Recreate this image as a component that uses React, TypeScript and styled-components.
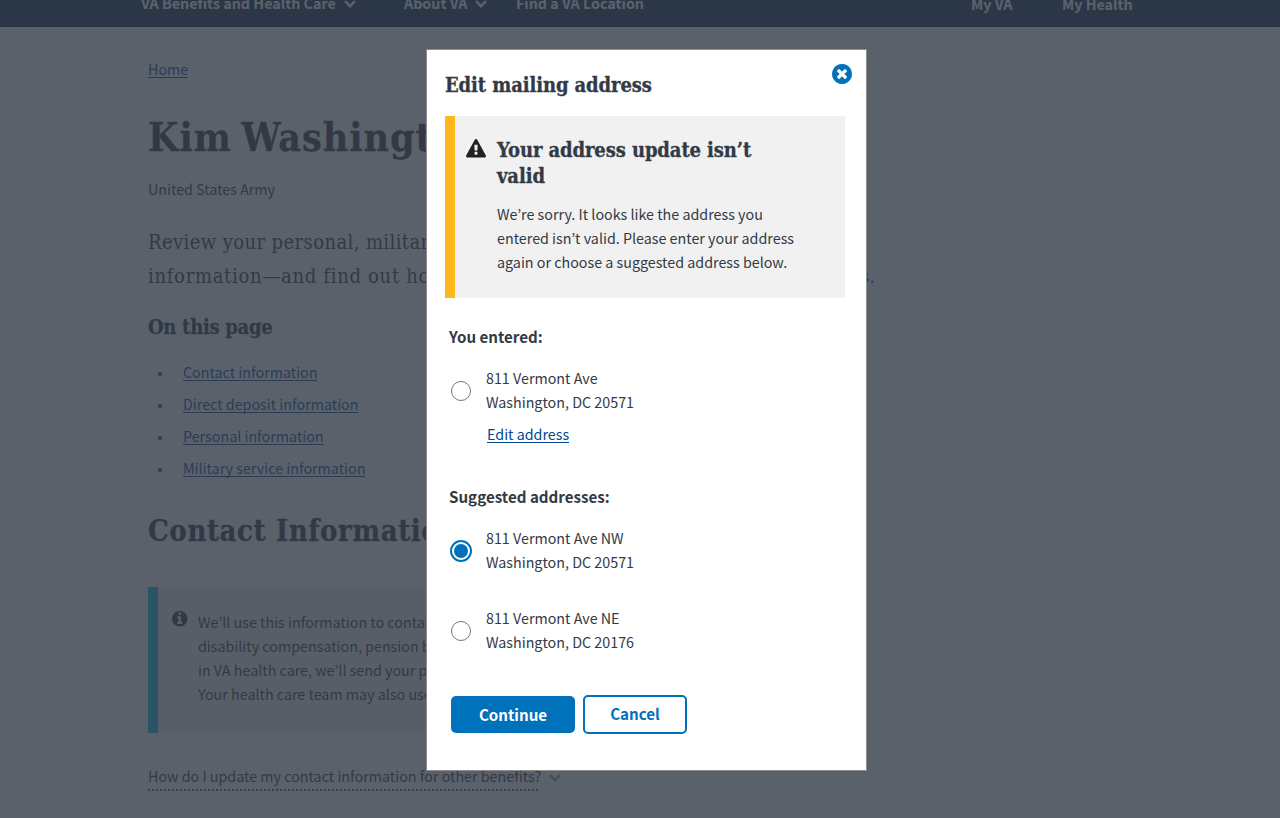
import React from "react";
import styled, { createGlobalStyle, css } from "styled-components";

const ink = "#323a45";
const blue = "#0071bb";
const link = "#004795";

const GlobalStyle = createGlobalStyle`
  * { box-sizing: border-box; }
  body { margin: 0; background: #fff; overflow: hidden; }
  h1, h2, h3, h4, p, ul { margin: 0; padding: 0; font-weight: inherit; }
`;

const sans = css`
  font-family: "Noto Sans CJK KR", "Open Sans", sans-serif;
  font-size: 14.3px;
  line-height: 24px;
`;
const slab = css`
  font-family: "DejaVu Serif Condensed", "DejaVu Serif", serif;
  font-stretch: condensed;
`;
const slabBold = css`
  ${slab}
  font-weight: 700;
  -webkit-text-stroke: 0.3px currentColor;
`;

const Page = styled.div`
  ${sans}
  height: 818px;
  overflow: hidden;
  color: ${ink};
  white-space: nowrap;
`;
const NavBar = styled.nav`
  height: 27px;
  background: #112e51;
  color: #fff;
  font-weight: 700;
  display: flex;
  align-items: flex-start;
  padding-left: 141px;
  overflow: hidden;
`;
const NavItem = styled.span<{ $width: number; $drop?: number }>`
  display: flex;
  align-items: center;
  gap: 8px;
  flex: none;
  width: ${(p) => p.$width}px;
  margin-top: ${(p) => -9 + (p.$drop ?? 0)}px;
  svg { margin-top: 2px; }
`;
const Content = styled.main`
  display: flex;
  flex-direction: column;
  align-items: flex-start;
  padding: 30px 0 0 148px;
`;
const Anchor = styled.a`
  display: inline-block;
  height: 21px;
  color: ${link};
  text-decoration: none;
  border-bottom: 1px solid ${link};
`;
const Name = styled.h1`
  ${slabBold}
  font-size: 39px;
  line-height: 48px;
  letter-spacing: 1px;
  word-spacing: -4px;
  margin-top: 35px;
`;
const Branch = styled.p`
  margin-top: 16px;
`;
const Intro = styled.p`
  ${slab}
  font-size: 20px;
  line-height: 34px;
  margin-top: 24px;
  width: 727px;
`;
const IntroLine = styled.span<{ $track: number }>`
  display: flex;
  justify-content: space-between;
  letter-spacing: ${(p) => p.$track}px;
`;
const LineEnd = styled.span`
  letter-spacing: 0;
`;
const PageHeading = styled.h3`
  ${slabBold}
  font-size: 20px;
  line-height: 26px;
  letter-spacing: -0.3px;
  margin-top: 21px;
`;
const LinkList = styled.ul`
  list-style: none;
  display: flex;
  flex-direction: column;
  gap: 8px;
  margin-top: 20px;
`;
const LinkRow = styled.li`
  display: flex;
  align-items: flex-start;
  height: 24px;
  padding-left: 10px;
  &::before {
    content: "";
    width: 4px;
    height: 4px;
    border-radius: 50%;
    background: ${ink};
    margin: 12px 21px 0 0;
  }
`;
const Section = styled.h2`
  ${slabBold}
  font-size: 29px;
  line-height: 40px;
  letter-spacing: 0.6px;
  margin-top: 31px;
`;
const InfoBox = styled.section`
  display: flex;
  width: 640px;
  height: 146px;
  margin-top: 36px;
  padding: 23px 0 0 14px;
  border-left: 10px solid #02bfe7;
  background: #f1f1f1;
  svg { flex: none; margin: 1px 10.5px 0 0; }
`;
const Expander = styled.div`
  display: flex;
  align-items: flex-start;
  gap: 11px;
  height: 27px;
  margin-top: 31px;
  svg { margin-top: 10px; }
`;
const ExpanderText = styled.span`
  width: 390px;
  height: 27px;
  border-bottom: 2px dotted ${blue};
`;

const Overlay = styled.div`
  ${sans}
  position: fixed;
  inset: 0;
  background: rgba(50, 58, 69, 0.8);
  color: ${ink};
  white-space: nowrap;
`;
const Dialog = styled.div`
  display: flex;
  flex-direction: column;
  width: 441px;
  height: 722px;
  margin: 49px 0 0 426px;
  padding: 14px 14px 0 18px;
  background: #fff;
  border: 1px solid #8b8d91;
`;
const DialogHeader = styled.header`
  display: flex;
  justify-content: space-between;
  align-items: flex-start;
  height: 52px;
`;
const DialogTitle = styled.h2`
  ${slabBold}
  font-size: 20px;
  line-height: 26px;
  letter-spacing: -0.1px;
`;
const HeaderTitle = styled(DialogTitle)`
  margin-top: 8px;
`;
const Close = styled.button`
  display: flex;
  padding: 0;
  border: 0;
  background: none;
  color: ${blue};
`;
const Warning = styled.section`
  display: flex;
  width: 400px;
  height: 182px;
  padding: 21px 0 0 11px;
  border-left: 10px solid #fdb81e;
  background: #f1f1f1;
  > svg { flex: none; margin: 2px 11px 0 0; color: #212121; }
`;
const WarningText = styled.p`
  margin-top: 13px;
`;
const Choices = styled.div`
  display: flex;
  flex-direction: column;
  padding-left: 4px;
`;
const GroupTitle = styled.h4<{ $top: number }>`
  font-size: 15.15px;
  font-weight: 700;
  line-height: 22px;
  padding-bottom: 2px;
  margin-top: ${(p) => p.$top}px;
`;
const Option = styled.label<{ $top: number }>`
  display: flex;
  height: 48px;
  margin-top: ${(p) => p.$top}px;
`;
const Radio = styled.span<{ $on?: boolean }>`
  flex: none;
  width: ${(p) => (p.$on ? 22 : 20)}px;
  height: ${(p) => (p.$on ? 22 : 20)}px;
  margin: ${(p) => (p.$on ? "14px 14px 0 1px" : "15px 15px 0 2px")};
  border-radius: 50%;
  border: ${(p) => (p.$on ? `2px solid ${blue}` : "1px solid #757575")};
  padding: 2px;
  background: ${(p) => (p.$on ? blue : "#fff")} content-box;
`;
const EditRow = styled.div`
  height: 24px;
  margin: 8px 0 0 38px;
`;
const Actions = styled.div`
  display: flex;
  align-items: center;
  gap: 8px;
  margin: 41px 0 0 2px;
`;
const Button = styled.button<{ $outline?: boolean }>`
  ${sans}
  font-size: 15.15px;
  font-weight: 700;
  width: ${(p) => (p.$outline ? 104 : 124)}px;
  height: ${(p) => (p.$outline ? 39 : 37)}px;
  padding: 0 0 ${(p) => (p.$outline ? 3 : 2)}px;
  border-radius: 5px;
  border: ${(p) => (p.$outline ? `2px solid ${blue}` : "0")};
  background: ${(p) => (p.$outline ? "#fff" : blue)};
  color: ${(p) => (p.$outline ? blue : "#fff")};
`;

const Chevron = ({ color = "currentColor" }: { color?: string }) => (
  <svg width="12" height="8" viewBox="0 0 12 8" fill="none" stroke={color} strokeWidth="2.6">
    <path d="M1 1.2 6 6.2 11 1.2" />
  </svg>
);

const InfoIcon = () => (
  <svg width="15.5" height="15.5" viewBox="128 128 1536 1536" fill="currentColor">
    <path d="M1152 1376v-160q0-14-9-23t-23-9h-96v-512q0-14-9-23t-23-9h-320q-14 0-23 9t-9 23v160q0 14 9 23t23 9h96v320h-96q-14 0-23 9t-9 23v160q0 14 9 23t23 9h448q14 0 23-9t9-23zm-128-896v-160q0-14-9-23t-23-9h-192q-14 0-23 9t-9 23v160q0 14 9 23t23 9h192q14 0 23-9t9-23zm640 416q0 209-103 385.5t-279.5 279.5-385.5 103-385.5-103-279.5-279.5-103-385.5 103-385.5 279.5-279.5 385.5-103 385.5 103 279.5 279.5 103 385.5z" />
  </svg>
);

const WarningIcon = () => (
  <svg width="20" height="20" viewBox="0 0 1792 1792" fill="currentColor">
    <path d="M1024 1375v-190q0-14-9.5-23.5t-22.5-9.5h-192q-13 0-22.5 9.5t-9.5 23.5v190q0 14 9.5 23.5t22.5 9.5h192q13 0 22.5-9.5t9.5-23.5zm-2-374l18-459q0-12-10-19-13-11-24-11h-220q-11 0-24 11-10 7-10 21l17 457q0 10 10 16.5t24 6.5h185q14 0 23.5-6.5t10.5-16.5zm-14-934l768 1408q35 63-2 126-17 29-46.5 46t-63.5 17h-1536q-34 0-63.5-17t-46.5-46q-37-63-2-126l768-1408q17-31 47-49t65-18 65 18 47 49z" />
  </svg>
);

const CloseIcon = () => (
  <svg width="20" height="20" viewBox="128 128 1536 1536" fill="currentColor">
    <path d="M1277 1122q0-26-19-45l-181-181 181-181q19-19 19-45 0-27-19-46l-90-90q-19-19-46-19-26 0-45 19l-181 181-181-181q-19-19-45-19-27 0-46 19l-90 90q-19 19-19 46 0 26 19 45l181 181-181 181q-19 19-19 45 0 27 19 46l90 90q19 19 46 19 26 0 45-19l181-181 181 181q19 19 45 19 27 0 46-19l90-90q19-19 19-46zm387-226q0 209-103 385.5t-279.5 279.5-385.5 103-385.5-103-279.5-279.5-103-385.5 103-385.5 279.5-279.5 385.5-103 385.5 103 279.5 279.5 103 385.5z" />
  </svg>
);

const sections = ["Contact information", "Direct deposit information", "Personal information", "Military service information"];

const Address = ({ street, city, top, on }: { street: string; city: string; top: number; on?: boolean }) => (
  <Option $top={top}>
    <Radio $on={on} role="radio" aria-checked={!!on} />
    <span>{street}<br />{city}</span>
  </Option>
);

export default function App() {
  return (
    <>
      <GlobalStyle />
      <Page>
        <NavBar>
          <NavItem $width={263}>VA Benefits and Health Care <Chevron /></NavItem>
          <NavItem $width={112}>About VA <Chevron /></NavItem>
          <NavItem $width={455}>Find a VA Location</NavItem>
          <NavItem $width={91} $drop={1}>My VA</NavItem>
          <NavItem $width={90} $drop={1}>My Health</NavItem>
        </NavBar>
        <Content>
          <Anchor>Home</Anchor>
          <Name>Kim Washington</Name>
          <Branch>United States Army</Branch>
          <Intro>
            <IntroLine $track={0.4}>Review your personal, military, and contact</IntroLine>
            <IntroLine $track={0.7}>
              <span>information—and find out how</span>
              <LineEnd>to update your details.</LineEnd>
            </IntroLine>
          </Intro>
          <PageHeading>On this page</PageHeading>
          <LinkList>
            {sections.map((s) => <LinkRow key={s}><Anchor>{s}</Anchor></LinkRow>)}
          </LinkList>
          <Section>Contact Information</Section>
          <InfoBox>
            <InfoIcon />
            <p>
              We’ll use this information to contact you about your<br />
              disability compensation, pension benefits, and claims<br />
              in VA health care, we’ll send your prescriptions here.<br />
              Your health care team may also use this information.
            </p>
          </InfoBox>
          <Expander>
            <ExpanderText>How do I update my contact information for other benefits?</ExpanderText>
            <Chevron color="#999" />
          </Expander>
        </Content>
      </Page>
      <Overlay>
        <Dialog role="dialog" aria-modal="true">
          <DialogHeader>
            <HeaderTitle>Edit mailing address</HeaderTitle>
            <Close aria-label="Close"><CloseIcon /></Close>
          </DialogHeader>
          <Warning>
            <WarningIcon />
            <div>
              <DialogTitle>Your address update isn’t<br />valid</DialogTitle>
              <WarningText>
                We’re sorry. It looks like the address you<br />
                entered isn’t valid. Please enter your address<br />
                again or choose a suggested address below.
              </WarningText>
            </div>
          </Warning>
          <Choices>
            <GroupTitle $top={27}>You entered:</GroupTitle>
            <Address street="811 Vermont Ave" city="Washington, DC 20571" top={17} />
            <EditRow><Anchor href="#edit">Edit address</Anchor></EditRow>
            <GroupTitle $top={39}>Suggested addresses:</GroupTitle>
            <Address street="811 Vermont Ave NW" city="Washington, DC 20571" top={17} on />
            <Address street="811 Vermont Ave NE" city="Washington, DC 20176" top={32} />
            <Actions>
              <Button>Continue</Button>
              <Button $outline>Cancel</Button>
            </Actions>
          </Choices>
        </Dialog>
      </Overlay>
    </>
  );
}
